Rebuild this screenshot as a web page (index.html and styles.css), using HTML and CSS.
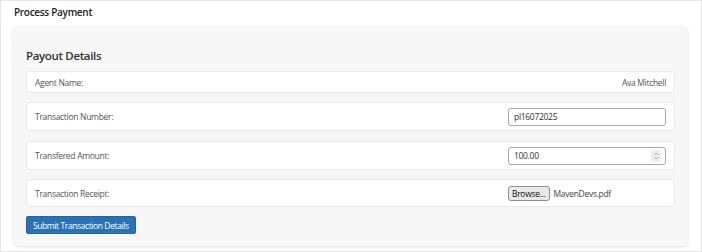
FILE: index.html
```html
<!DOCTYPE html>
<html>
<head>
<meta charset="utf-8">
<link rel="stylesheet" href="styles.css">
</head>
<body>
<div class="page">
  <h1 class="title">Process Payment</h1>
  <div class="card">
    <h2 class="card-title">Payout Details</h2>
    <div class="row row-static">
      <span class="label">Agent Name:</span>
      <span class="value">Ava Mitchell</span>
    </div>
    <div class="row row-gap-lg">
      <span class="label">Transaction Number:</span>
      <div class="field"><span class="field-text">pl16072025</span></div>
    </div>
    <div class="row">
      <span class="label">Transfered Amount:</span>
      <div class="field"><span class="field-text">100.00</span>
        <span class="spinner"><svg width="7" height="10" viewBox="0 0 7 10"><path d="M1.5 4 L3.5 2 L5.5 4" fill="none" stroke="#9a9a9a" stroke-width="0.8"/><path d="M1.5 6 L3.5 8 L5.5 6" fill="none" stroke="#9a9a9a" stroke-width="0.8"/></svg></span>
      </div>
    </div>
    <div class="row row-short">
      <span class="label">Transaction Receipt:</span>
      <div class="file"><span class="browse">Browse...</span><span class="file-name">MavenDevs.pdf</span></div>
    </div>
    <div class="actions"><span class="submit">Submit Transaction Details</span></div>
  </div>
</div>
</body>
</html>
```
FILE: styles.css
```css
html, body {
  margin: 0;
  padding: 0;
  background: #ffffff;
}
body {
  font-family: "Open Sans", "Noto Sans", sans-serif;
  color: #444;
}
.page {
  box-sizing: border-box;
  width: 702px;
  height: 252px;
  border: 1.5px solid #e6e6e6;
  padding: 3px 12px 0 12px;
}
.title {
  margin: 0 0 0 1px;
  font-size: 10px;
  letter-spacing: -0.3px;
  font-weight: 600;
  color: #222;
  line-height: 16px;
}
.card {
  margin-top: 6px;
  width: 675px;
  box-sizing: border-box;
  height: 220px;
  background: #f7f7f7;
  border-radius: 6px;
  box-shadow: 0 1px 3px rgba(0,0,0,0.12);
  padding: 21px 13px 0 13px;
}
.card-title {
  margin: 0 0 7px 0;
  font-size: 11.5px;
  letter-spacing: -0.35px;
  font-weight: 600;
  color: #333;
  line-height: 17px;
}
.row {
  box-sizing: border-box;
  height: 29px;
  background: #fff;
  border: 1px solid #e8e8e8;
  border-radius: 4px;
  display: flex;
  align-items: center;
  justify-content: space-between;
  padding: 0 8px;
  margin-bottom: 9px;
  font-size: 8.5px;
  letter-spacing: -0.3px;
  color: #555;
}
.row-static {
  height: 22px;
}
.row-gap-lg {
  margin-bottom: 10px;
}
.row-short {
  height: 28px;
}
.value {
  color: #555;
}
.field {
  box-sizing: border-box;
  width: 158px;
  height: 18px;
  border: 1px solid #a8a8a8;
  border-radius: 3px;
  display: flex;
  align-items: center;
  justify-content: space-between;
  padding: 0 4px 0 5px;
  color: #333;
}
.spinner {
  display: flex;
  align-items: center;
  justify-content: center;
  width: 10px;
  height: 12px;
  background: #eeeeee;
  border-radius: 2px;
}
.file {
  width: 158px;
  display: flex;
  align-items: center;
  gap: 4px;
}
.browse {
  box-sizing: border-box;
  height: 15px;
  padding: 0 3px;
  border: 1px solid #8f8f8f;
  border-radius: 3px;
  background: #e9e9e9;
  color: #111;
  display: flex;
  align-items: center;
}
.file-name {
  color: #444;
}
.actions {
  display: flex;
}
.submit {
  display: flex;
  align-items: center;
  box-sizing: border-box;
  height: 18px;
  padding: 0 6px;
  background: #2b72b5;
  border: 1px solid #23639f;
  border-radius: 2px;
  color: #fff;
  font-size: 8.5px;
  letter-spacing: -0.4px;
}
```
